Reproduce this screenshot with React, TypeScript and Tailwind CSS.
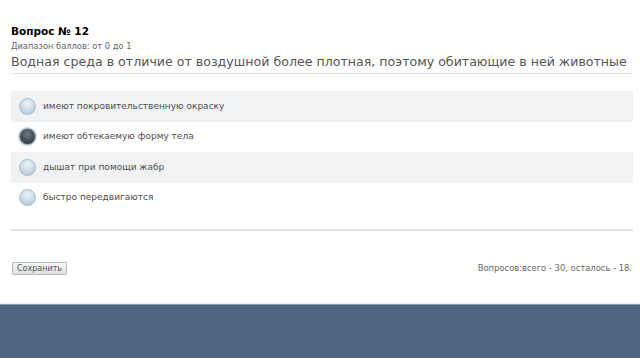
import React, { useState } from 'react';

const options = [
  'имеют покровительственную окраску',
  'имеют обтекаемую форму тела',
  'дышат при помощи жабр',
  'быстро передвигаются',
];

function Radio({ checked }: { checked: boolean }) {
  return (
    <span
      className={`block w-[17px] h-[17px] rounded-full border ${
        checked
          ? 'border-[#9aa7b3] bg-[radial-gradient(circle_at_50%_35%,#6f7d89_0%,#3d4852_60%,#2c353d_100%)] shadow-[0_0_0_1px_#c6d2dc]'
          : 'border-[#a9bccb] bg-[radial-gradient(circle_at_50%_30%,#eef4f8_0%,#c9d8e4_55%,#a9bfd0_100%)]'
      }`}
    />
  );
}

export default function App() {
  const [selected, setSelected] = useState(1);

  return (
    <div className="w-[640px] h-[358px] bg-white flex flex-col font-['DejaVu_Sans',sans-serif]">
      <div className="flex-1 pl-[11px] pr-[7px] pt-[25px] flex flex-col">
        {/* Question header */}
        <div className="text-[10.5px] font-bold text-black leading-[12px]">Вопрос № 12</div>
        <div className="text-[8.3px] text-[#666] mt-[4px] leading-[11px]">Диапазон баллов: от 0 до 1</div>
        <div className="text-[12.6px] text-[#555] leading-[16px] mt-[2px] pb-[3px] border-b border-[#dde3e8] whitespace-nowrap">
          Водная среда в отличие от воздушной более плотная, поэтому обитающие в ней животные
        </div>

        {/* Answers */}
        <div className="mt-[17px] flex flex-col">
          {options.map((opt, i) => (
            <div
              key={i}
              onClick={() => setSelected(i)}
              className={`h-[30.5px] flex items-center pl-[8px] gap-[7px] cursor-pointer ${
                i % 2 === 0 ? 'bg-[#f1f2f4]' : 'bg-white'
              }`}
            >
              <Radio checked={selected === i} />
              <span className="text-[9px] text-[#4e4e4e]">{opt}</span>
            </div>
          ))}
        </div>

        <div className="mt-[16px] h-[2px] bg-[#e2e2e2]" />

        {/* Footer of form */}
        <div className="mt-[31px] mr-[1px] flex items-center justify-between">
          <button className="h-[13px] ml-[1px] px-[4px] text-[8px] leading-[11px] text-[#555] border border-[#b8bcc2] bg-[linear-gradient(#f4f5f6,#dfe2e5)] rounded-[1px]">
            Сохранить
          </button>
          <span className="text-[8.4px] text-[#666]">Вопросов:всего - 30, осталось - 18.</span>
        </div>
      </div>

      <div className="h-[1px] bg-[#eeeef5]" />
      <div className="h-[54px] bg-[#4f6584] border-t border-[#8a98ab]" />
    </div>
  );
}
